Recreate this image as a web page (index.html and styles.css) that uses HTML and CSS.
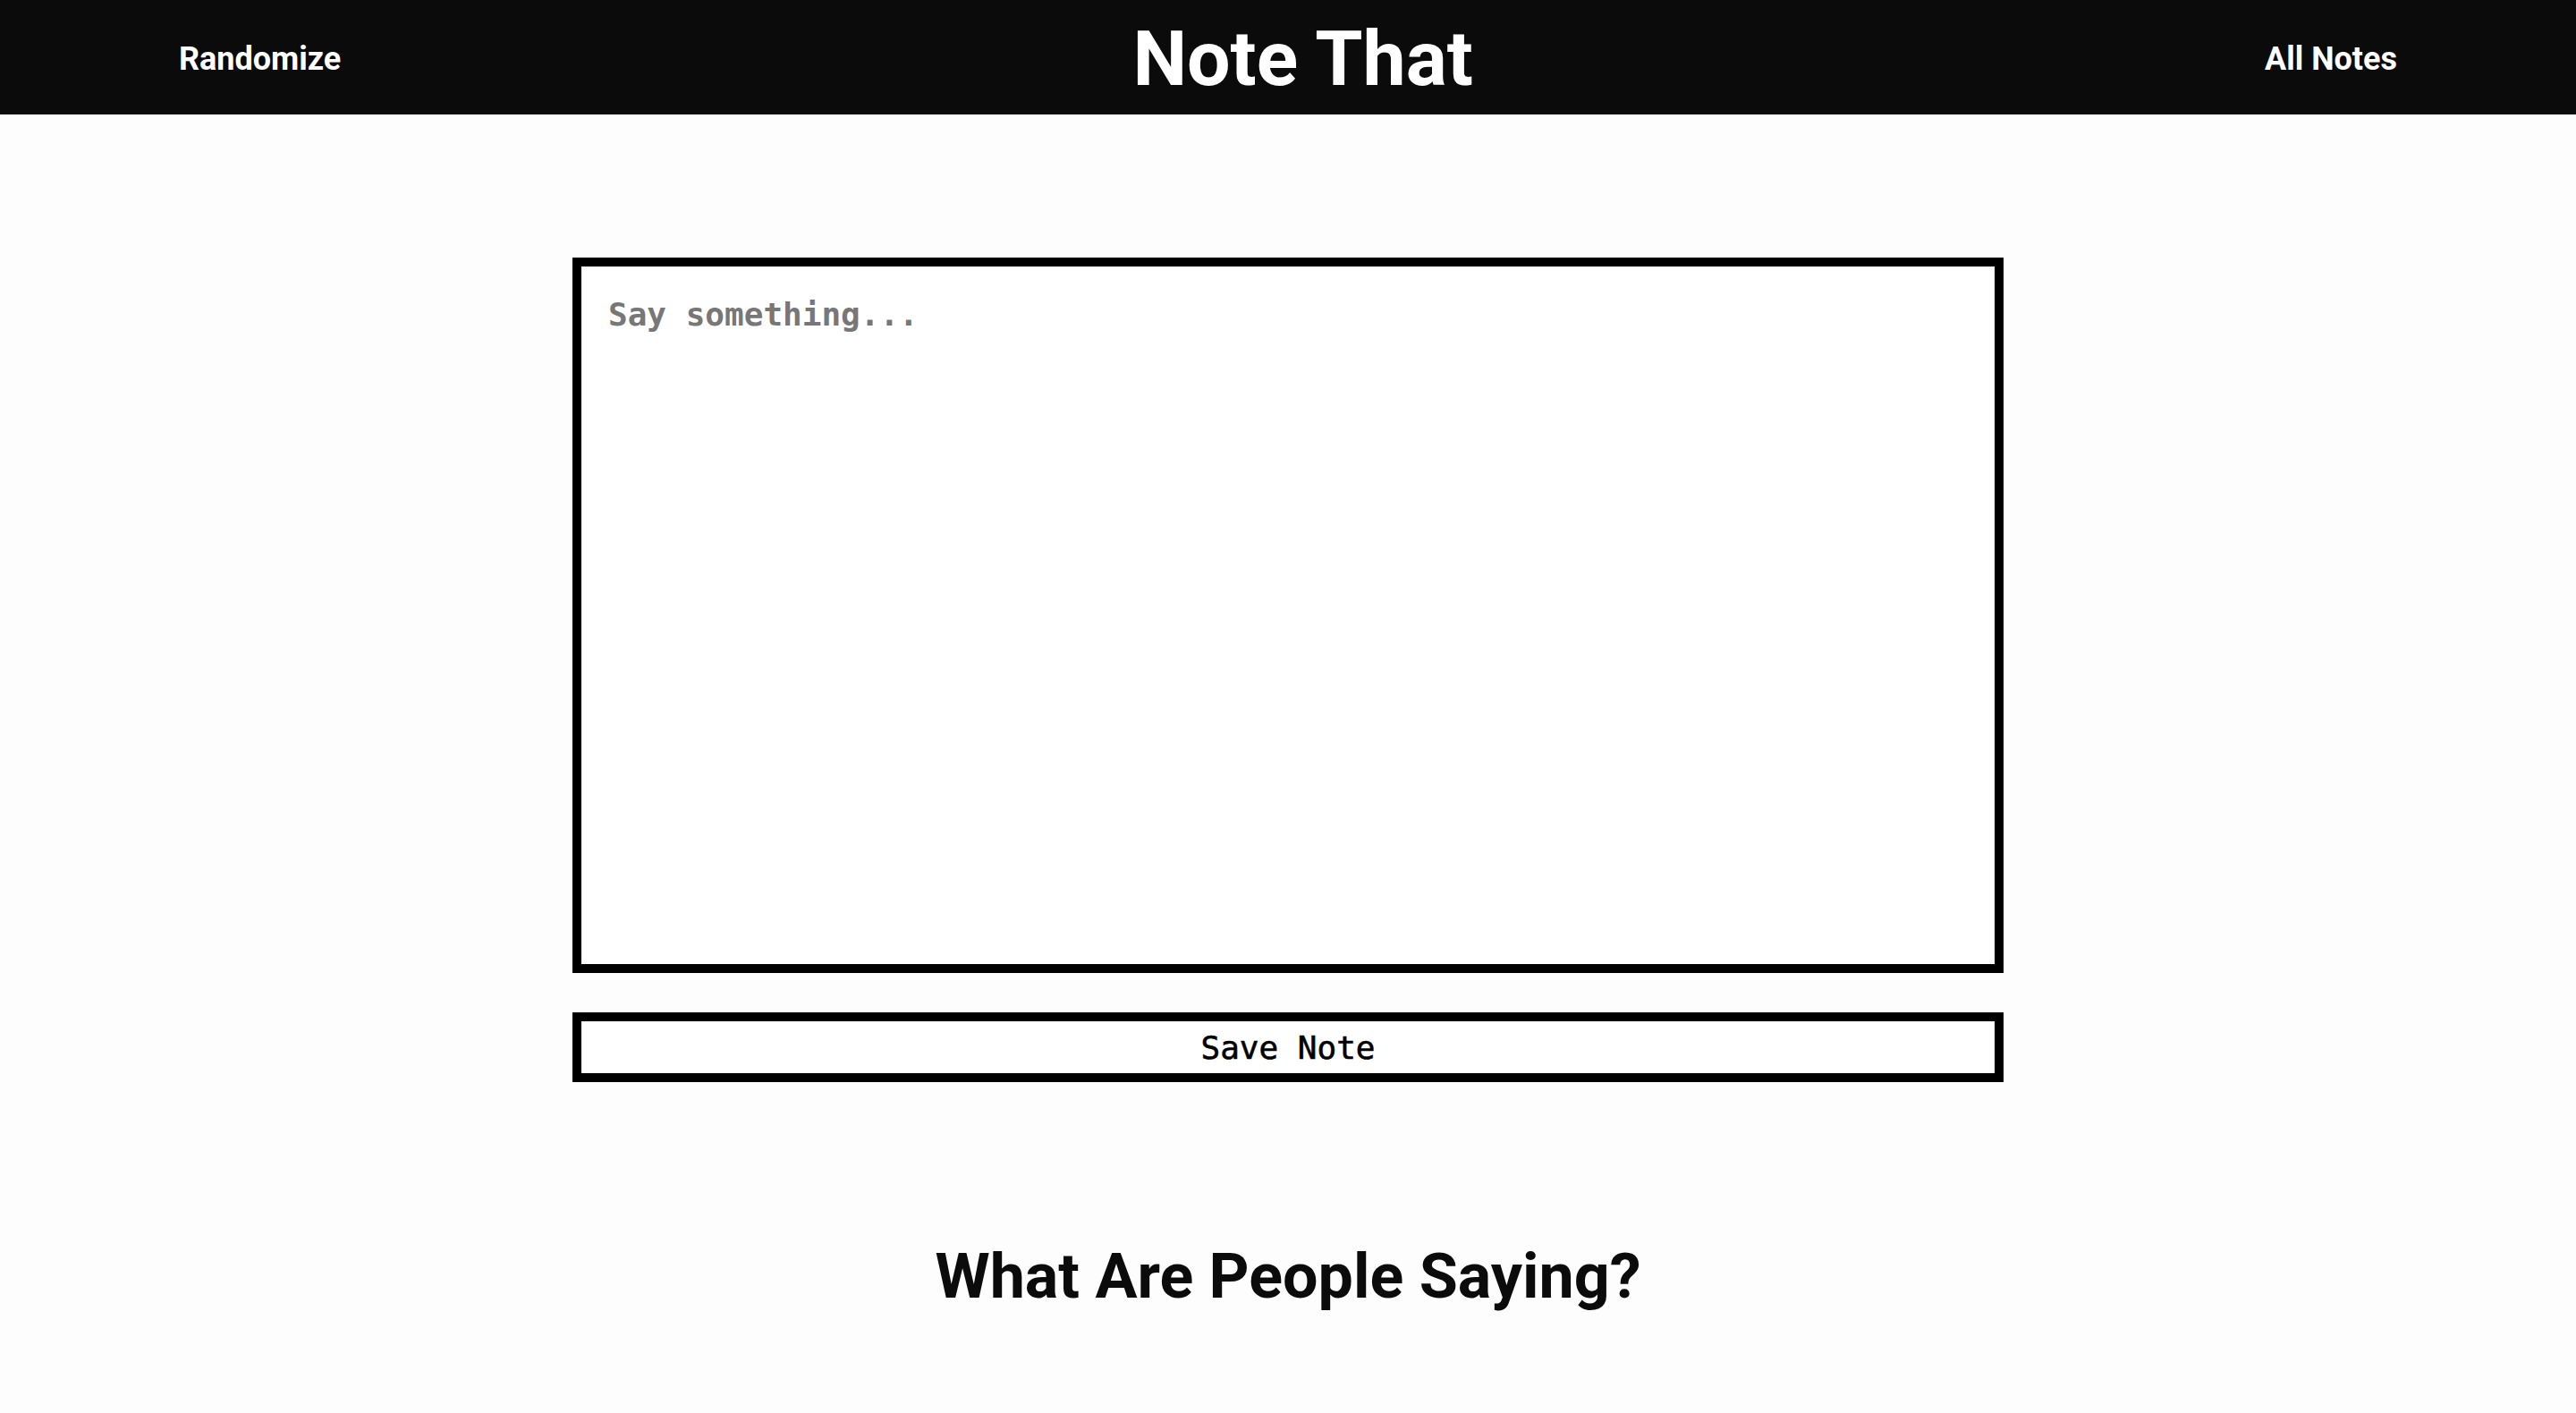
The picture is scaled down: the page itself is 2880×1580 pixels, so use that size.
FILE: index.html
```html
<!DOCTYPE html>
<html lang="en">
<head>
<meta charset="utf-8">
<title>Note That</title>
<link rel="stylesheet" href="styles.css">
</head>
<body>
<header class="topbar">
  <a class="nav-link" href="#">Randomize</a>
  <h1 class="brand">Note That</h1>
  <a class="nav-link" href="#">All Notes</a>
</header>
<main class="main">
  <form class="note-form">
    <textarea class="note-input" placeholder="Say something..."></textarea>
    <button type="button" class="save-btn">Save Note</button>
  </form>
  <h2 class="section-title">What Are People Saying?</h2>
</main>
</body>
</html>
```
FILE: styles.css
```css
* { box-sizing: border-box; }
html, body { margin: 0; padding: 0; }
body {
  background: #fdfdfd;
  font-family: Roboto, "Liberation Sans", sans-serif;
  color: #0b0b0b;
}
.topbar {
  height: 128px;
  background: #0b0b0b;
  display: flex;
  align-items: center;
  justify-content: space-between;
  padding: 3px 200px 0;
}
.nav-link {
  color: #ffffff;
  text-decoration: none;
  font-weight: 700;
  font-size: 36px;
  line-height: 1;
}
.brand {
  margin: 0;
  color: #ffffff;
  font-weight: 700;
  font-size: 86px;
  line-height: 1;
}
.main {
  display: flex;
  flex-direction: column;
  align-items: center;
  padding-top: 160px;
}
.note-form {
  width: 1600px;
  display: flex;
  flex-direction: column;
  gap: 44px;
}
.note-input {
  display: block;
  width: 1600px;
  height: 800px;
  border: 10px solid #000;
  border-radius: 0;
  background: #ffffff;
  padding: 32px 30px;
  resize: none;
  outline: none;
  font-family: "DejaVu Sans Mono", "Liberation Mono", monospace;
  font-size: 36px;
  line-height: 1.2;
  color: #000;
}
.note-input::placeholder {
  color: #777777;
  font-weight: 700;
}
.save-btn {
  width: 1600px;
  height: 78px;
  border: 10px solid #000;
  border-radius: 0;
  background: #ffffff;
  font-family: "DejaVu Sans Mono", "Liberation Mono", monospace;
  font-size: 36px;
  color: #000;
  -webkit-text-stroke: 0.6px #000;
  padding: 0;
  cursor: pointer;
}
.section-title {
  margin: 175px 0 0;
  font-weight: 700;
  font-size: 70px;
  line-height: 84px;
  text-align: center;
}
```
